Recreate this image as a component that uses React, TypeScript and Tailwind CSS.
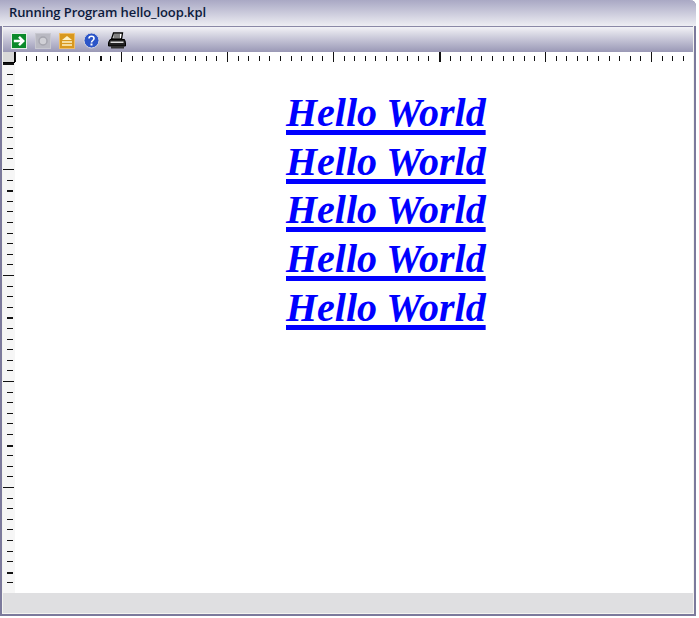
const minorTicks = Array.from({ length: 65 }, (_, i) => i);

function TopRuler() {
  return (
    <svg width="677" height="11" className="block">
      {minorTicks.map((i) => {
        const x = Math.round(i * 10.6);
        const major = i % 10 === 0;
        const wide = i === 8 || i === 40;
        return (
          <rect
            key={i}
            x={x}
            y={major ? 0 : 4}
            width={wide ? 2 : 1}
            height={major ? 10 : 5}
            fill="#111"
          />
        );
      })}
    </svg>
  );
}

function LeftRuler() {
  return (
    <svg width="11" height="528" className="block">
      {Array.from({ length: 50 }, (_, i) => {
        const y = Math.round(i * 10.6);
        const major = i % 10 === 0;
        return (
          <rect
            key={i}
            x={major ? 0 : 4}
            y={y}
            width={major ? 11 : 6}
            height={i % 12 === 0 ? 2 : 1}
            fill="#111"
          />
        );
      })}
    </svg>
  );
}

function GoIcon() {
  return (
    <svg width="16" height="16" viewBox="0 0 17 17">
      <rect x="0.5" y="0.5" width="16" height="16" fill="#0b8a2a" stroke="#eef4ee" />
      <path d="M3 8.5h9M8.5 4l4.5 4.5L8.5 13" fill="none" stroke="#fff" strokeWidth="2.6" />
    </svg>
  );
}

function StopIcon() {
  return (
    <svg width="16" height="16" viewBox="0 0 16 16">
      <rect x="0.5" y="0.5" width="15" height="15" fill="#b9b9c2" stroke="#c8c8d0" />
      <circle cx="8" cy="8" r="4" fill="#d0d0d6" stroke="#a5a5ae" strokeWidth="1.5" />
    </svg>
  );
}

function EjectIcon() {
  return (
    <svg width="16" height="16" viewBox="0 0 16 16">
      <rect x="0.5" y="0.5" width="15" height="15" fill="#d8981e" stroke="#eebd6a" />
      <path d="M8 3l5 4H3z" fill="#fdf2c8" />
      <path d="M3 9h10M3 12h10" stroke="#fdf2c8" strokeWidth="1.5" />
    </svg>
  );
}

function HelpIcon() {
  return (
    <svg width="17" height="17" viewBox="0 0 17 17">
      <circle cx="8.5" cy="8.5" r="7.5" fill="#2c55c8" stroke="#d5d7e2" />
      <path d="M6 6.5c0-3 5-3 5 0 0 2-2.5 2-2.5 4" fill="none" stroke="#fff" strokeWidth="1.6" />
      <rect x="7.5" y="11.5" width="2" height="2" fill="#fff" />
    </svg>
  );
}

function PrintIcon() {
  return (
    <svg width="18" height="17" viewBox="0 0 18 17">
      <path d="M5.5 1h9l-1 6h-10z" fill="#fff" stroke="#000" strokeWidth="1.3" />
      <path d="M5.5 3h6.5M5.5 5h6.5" stroke="#000" />
      <path d="M2 7.5h14.5l1 3v3.5H.5v-3.5z" fill="#222" stroke="#000" />
      <rect x="2.5" y="9.5" width="13" height="1.5" fill="#ddd" />
      <rect x="3" y="14" width="13" height="2.5" fill="#333" />
    </svg>
  );
}

export default function App() {
  return (
    <div className="relative h-[618px] w-[699px] bg-white font-['Open_Sans',sans-serif]">
      <div className="flex h-[616px] w-[696px] flex-col rounded-tr-md border-r-2 border-b-2 border-l-2 border-[#7c7a9c]">
        <div className="-ml-[2px] -mr-[2px] flex h-[26px] shrink-0 items-center rounded-tr-md bg-gradient-to-b from-[#a9a8c4] to-[#eeeef3] pl-[9px] text-[13px] font-semibold tracking-[-0.1px] text-[#0c1a3c]">
          Running Program hello_loop.kpl
        </div>
        <div className="flex min-h-0 flex-1 flex-col border-r border-b border-l border-[#f4f4ef] bg-white">
          <div className="flex h-[26px] shrink-0 items-center gap-[8px] border-t border-[#8a88a6] bg-gradient-to-b from-[#f2f2f6] to-[#9a98b6] pl-[8px] pt-[2px]">
            <GoIcon />
            <StopIcon />
            <EjectIcon />
            <HelpIcon />
            <PrintIcon />
          </div>
          <div className="flex h-[11px] shrink-0">
            <div className="h-[11px] w-[12px] border-r border-b border-black bg-[#d8d8d8]" />
            <TopRuler />
          </div>
          <div className="flex min-h-0 flex-1">
            <div className="w-[12px] shrink-0 overflow-hidden bg-[#f6f6f6]">
              <LeftRuler />
            </div>
            <div className="flex-1 pl-[271px] pt-[26px] font-['Liberation_Serif',serif] text-[40px] font-bold italic leading-[48.7px] text-[#0000ff] underline decoration-[5px] underline-offset-[4px]">
              <p>Hello World</p>
              <p>Hello World</p>
              <p>Hello World</p>
              <p>Hello World</p>
              <p>Hello World</p>
            </div>
          </div>
          <div className="h-[20px] shrink-0 bg-[#dfdfe1]" />
        </div>
      </div>
    </div>
  );
}
